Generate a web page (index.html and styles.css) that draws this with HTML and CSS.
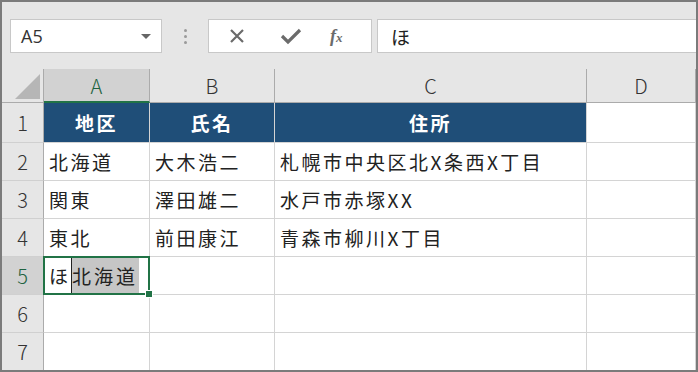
FILE: index.html
```html
<!doctype html>
<html lang="ja">
  <head>
    <meta charset="UTF-8" />
    <title>Sheet</title>
    <link rel="stylesheet" href="styles.css">
  </head>
  <body>
    <div class="frame">
      <div class="toolbar">
        <div class="name-box">
          <span>A5</span>
          <span class="caret"></span>
        </div>
        <div class="dots"><i></i><i></i><i></i></div>
        <div class="fx-buttons">
          <svg class="icon" width="18" height="18" viewBox="0 0 18 18">
            <path d="M3 3 L15 15 M15 3 L3 15" stroke="#6b6b6b" stroke-width="2.2" fill="none" />
          </svg>
          <svg class="icon" width="22" height="18" viewBox="0 0 22 18">
            <path d="M2 9 L8 15 L20 3" stroke="#6b6b6b" stroke-width="3.2" fill="none" />
          </svg>
          <span class="fx">f<small>x</small></span>
        </div>
        <div class="formula">ほ</div>
      </div>

      <div class="sheet">
        <div class="corner"><span></span></div>
        <div class="col-head active">A</div>
        <div class="col-head">B</div>
        <div class="col-head">C</div>
        <div class="col-head">D</div>

        <div class="row-head">1</div>
        <div class="cell title">地区</div>
        <div class="cell title">氏名</div>
        <div class="cell title">住所</div>
        <div class="cell"></div>

        <div class="row-head">2</div>
        <div class="cell">北海道</div>
        <div class="cell">大木浩二</div>
        <div class="cell">札幌市中央区北X条西X丁目</div>
        <div class="cell"></div>

        <div class="row-head">3</div>
        <div class="cell">関東</div>
        <div class="cell">澤田雄二</div>
        <div class="cell">水戸市赤塚XX</div>
        <div class="cell"></div>

        <div class="row-head">4</div>
        <div class="cell">東北</div>
        <div class="cell">前田康江</div>
        <div class="cell">青森市柳川X丁目</div>
        <div class="cell"></div>

        <div class="row-head active">5</div>
        <div class="cell editing">
          <span>ほ</span><span class="cursor"></span><span class="selected">北海道</span>
          <span class="handle"></span>
        </div>
        <div class="cell"></div>
        <div class="cell"></div>
        <div class="cell"></div>

        <div class="row-head">6</div>
        <div class="cell"></div>
        <div class="cell"></div>
        <div class="cell"></div>
        <div class="cell"></div>

        <div class="row-head">7</div>
        <div class="cell"></div>
        <div class="cell"></div>
        <div class="cell"></div>
        <div class="cell"></div>
      </div>
    </div>
  </body>
</html>
```

FILE: styles.css
```css
* {
  box-sizing: border-box;
}

body {
  margin: 0;
  font-family: "Noto Sans CJK JP", "Noto Sans", sans-serif;
  color: #222;
  background-color: #fff;
}

.frame {
  width: 698px;
  height: 372px;
  border: 2px solid #7b7b7b;
  background-color: #e6e6e6;
  overflow: hidden;
}

.toolbar {
  height: 67px;
  display: flex;
  align-items: flex-start;
  padding: 17px 0 0 8px;
}

.name-box {
  width: 152px;
  height: 34px;
  background-color: #fff;
  border: 1px solid #c8c8c8;
  display: flex;
  align-items: center;
  justify-content: space-between;
  padding: 0 10px 0 10px;
  font-family: "Open Sans", sans-serif;
  font-size: 18px;
  color: #333;
}

.caret {
  width: 0;
  height: 0;
  border-left: 5px solid transparent;
  border-right: 5px solid transparent;
  border-top: 5px solid #666;
}

.dots {
  width: 46px;
  height: 34px;
  display: flex;
  flex-direction: column;
  align-items: center;
  justify-content: center;
  gap: 3px;
}
.dots i {
  width: 3px;
  height: 3px;
  border-radius: 2px;
  background-color: #9a9a9a;
}

.fx-buttons {
  width: 164px;
  height: 34px;
  background-color: #fff;
  border: 1px solid #c8c8c8;
  display: flex;
  align-items: center;
  padding-left: 19px;
  gap: 34px;
}

.fx {
  font-family: "Liberation Serif", serif;
  font-style: italic;
  font-weight: bold;
  font-size: 18px;
  color: #6b6b6b;
  margin-left: -6px;
}
.fx small {
  font-size: 13px;
}

.formula {
  flex: 1;
  height: 34px;
  margin-left: 5px;
  background-color: #fff;
  border: 1px solid #c8c8c8;
  border-right: none;
  display: flex;
  align-items: center;
  padding-left: 13px;
  font-size: 19px;
  color: #222;
}

.sheet {
  display: grid;
  grid-template-columns: 42px 106px 125px 312px 1fr;
  grid-template-rows: 34px 40px repeat(6, 38px);
  background-color: #fff;
}

.corner {
  background-color: #e6e6e6;
  border-right: 1px solid #ababab;
  border-bottom: 1px solid #ababab;
  position: relative;
}
.corner span {
  position: absolute;
  right: 3px;
  bottom: 3px;
  width: 0;
  height: 0;
  border-left: 25px solid transparent;
  border-bottom: 25px solid #b6b6b6;
}

.col-head {
  background-color: #e6e6e6;
  border-right: 1px solid #ababab;
  border-bottom: 1px solid #ababab;
  display: flex;
  align-items: center;
  justify-content: center;
  font-size: 20px;
  font-weight: 300;
  color: #333;
}
.col-head.active {
  background-color: #d2d2d2;
  border-bottom: 2px solid #217346;
  color: #1e6341;
}

.row-head {
  background-color: #e6e6e6;
  border-right: 1px solid #ababab;
  border-bottom: 1px solid #d0d0d0;
  display: flex;
  align-items: center;
  justify-content: center;
  font-size: 20px;
  font-weight: 300;
  color: #333;
}
.row-head.active {
  background-color: #d2d2d2;
  color: #1e6341;
}

.cell {
  border-right: 1px solid #d4d4d4;
  border-bottom: 1px solid #d4d4d4;
  display: flex;
  align-items: center;
  padding-left: 5px;
  font-size: 19px;
  letter-spacing: 2.5px;
  white-space: nowrap;
}

.cell.title {
  background-color: #1f4e78;
  color: #fff;
  font-weight: bold;
  justify-content: center;
  padding-left: 0;
  border-bottom-color: #d4d4d4;
}

.cell.editing {
  border: 2px solid #217346;
  margin: -1px 0 0 -1px;
  padding-left: 4px;
  align-items: stretch;
  position: relative;
  letter-spacing: 0;
}
.cell.editing span {
  display: flex;
  align-items: center;
}
.cell.editing .cursor {
  width: 1px;
  background-color: #222;
  margin-left: 3px;
}
.cell.editing .selected {
  background-color: #c6c6c6;
  padding-right: 1px;
  letter-spacing: 3px;
}
.cell.editing .handle {
  position: absolute;
  right: -5px;
  bottom: -5px;
  width: 8px;
  height: 8px;
  background-color: #217346;
  border: 1px solid #fff;
}
```
